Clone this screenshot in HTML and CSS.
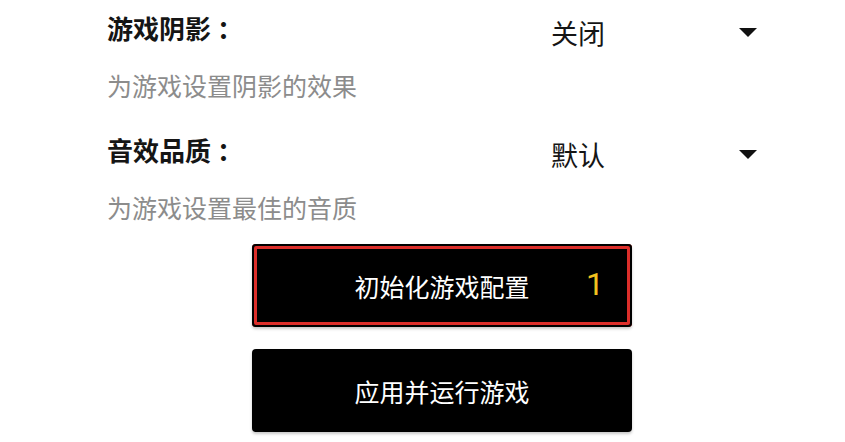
FILE: index.html
```html
<!DOCTYPE html>
<html lang="zh-CN">
<head>
<meta charset="utf-8">
<link rel="stylesheet" href="styles.css">
</head>
<body>
<div class="page">
  <div class="setting">
    <div class="row">
      <span class="label">游戏阴影<span class="colon">：</span></span>
      <div class="select"><span class="value">关闭</span><span class="caret"></span></div>
    </div>
    <div class="desc">为游戏设置阴影的效果</div>
  </div>
  <div class="setting second">
    <div class="row">
      <span class="label">音效品质<span class="colon">：</span></span>
      <div class="select"><span class="value">默认</span><span class="caret"></span></div>
    </div>
    <div class="desc">为游戏设置最佳的音质</div>
  </div>
  <div class="actions">
    <button class="btn btn-focus">初始化游戏配置<span class="badge">1</span></button>
    <button class="btn">应用并运行游戏</button>
  </div>
</div>
</body>
</html>
```
FILE: styles.css
```css
html, body {
  margin: 0;
  padding: 0;
  background: #ffffff;
}
body {
  width: 845px;
  height: 442px;
  overflow: hidden;
  font-family: "Noto Sans CJK SC", "Noto Sans", sans-serif;
}
.page {
  padding: 10px 0 0 107px;
}
.setting.second {
  margin-top: 29px;
}
.row {
  display: flex;
  height: 36px;
}
.label {
  width: 444px;
  font-size: 26px;
  line-height: 36px;
  font-weight: 700;
  color: #151515;
}
.colon {
  margin-left: 6px;
}
.select {
  margin-top: 5px;
  width: 206px;
  height: 36px;
  display: flex;
  align-items: center;
  justify-content: space-between;
}
.value {
  font-size: 27px;
  line-height: 36px;
  color: #151515;
}
.caret {
  width: 0;
  height: 0;
  border-left: 9px solid transparent;
  border-right: 9px solid transparent;
  border-top: 9px solid #111;
  margin-top: -2px;
}
.desc {
  margin-top: 21px;
  font-size: 25px;
  line-height: 36px;
  color: #8c8c8c;
}
.actions {
  margin: 19px 0 0 145px;
  display: flex;
  flex-direction: column;
  gap: 22px;
}
.btn {
  position: relative;
  width: 380px;
  height: 83px;
  border: none;
  border-radius: 4px;
  background: #000;
  color: #fff;
  font-family: "Noto Sans CJK SC", "Noto Sans", sans-serif;
  font-size: 25px;
  padding: 0;
  box-shadow: 0 2px 3px rgba(0, 0, 0, 0.22);
}
.btn-focus {
  box-shadow: inset 0 0 0 2px #000, inset 0 0 0 5px #dc2e2a, 0 2px 3px rgba(0, 0, 0, 0.22);
}
.badge {
  position: absolute;
  right: 28px;
  top: 50%;
  transform: translateY(-54%);
  font-family: Roboto, "Noto Sans", sans-serif;
  font-size: 32px;
  color: #f2c21f;
}
```
